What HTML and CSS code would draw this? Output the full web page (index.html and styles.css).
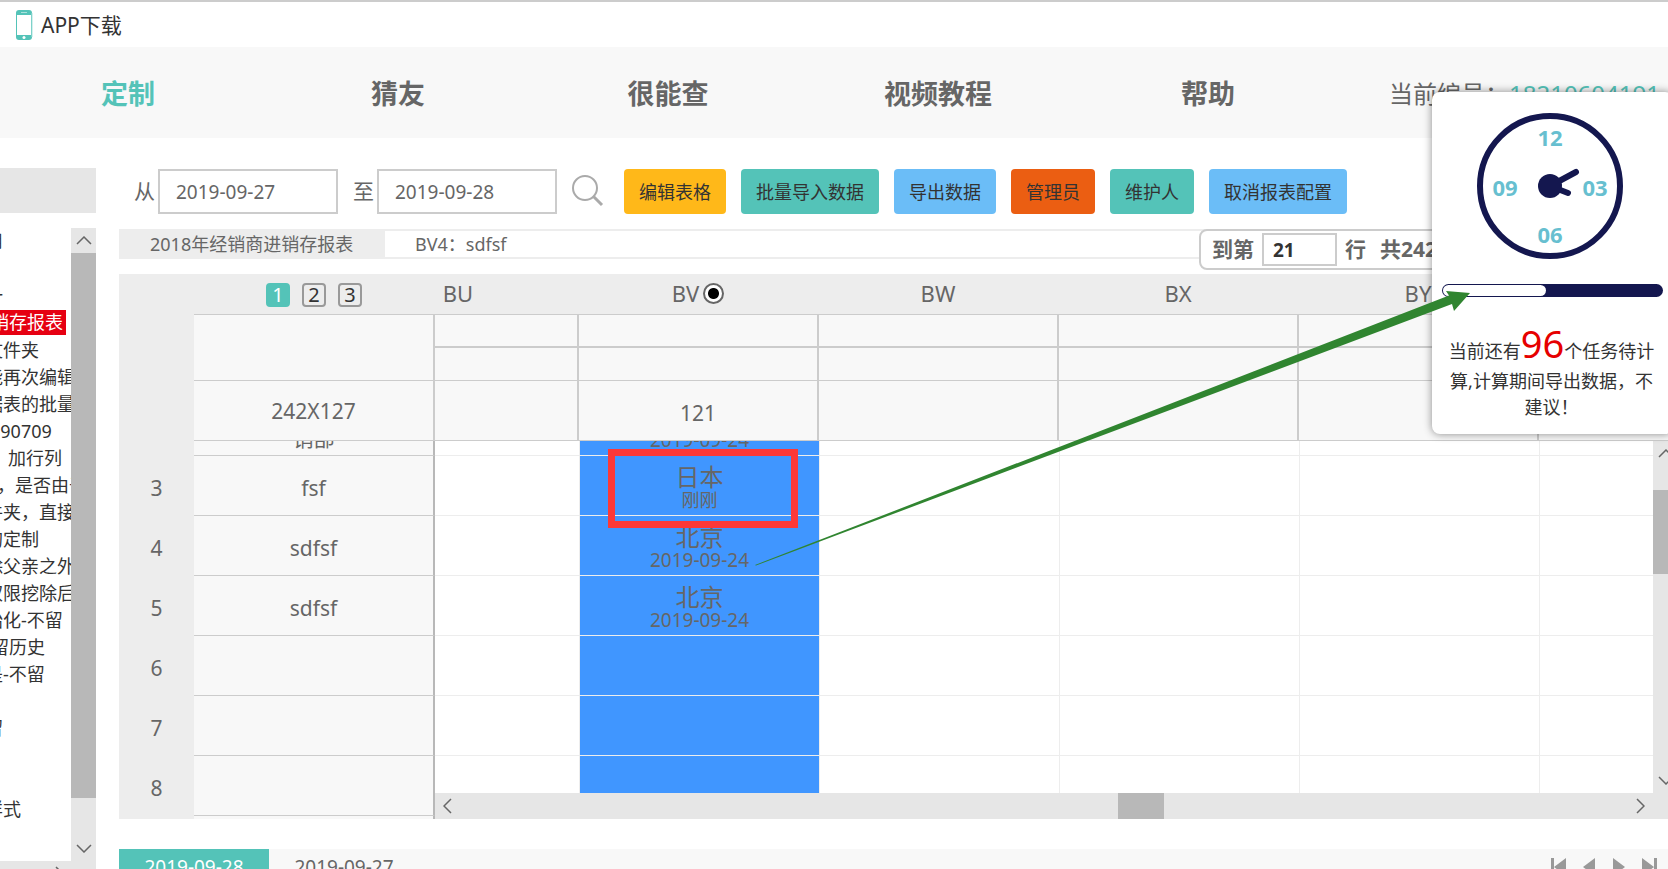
FILE: index.html
```html
<!DOCTYPE html>
<html lang="zh-CN">
<head>
<meta charset="utf-8">
<title>定制</title>
<link rel="stylesheet" href="styles.css">
</head>
<body>
<div class="page">
  <header class="topbar">
    <a class="app-link" href="#">
      <svg width="17" height="30" viewBox="0 0 17 30" aria-hidden="true"><rect width="16" height="30" rx="3" fill="#54c3b8"/><rect x="1" y="5" width="14" height="20" fill="#fff"/><path d="M5 2.5h6" stroke="#fff" stroke-opacity=".5"/><circle cx="8" cy="27.500" r="1.500" fill="#fff"/><path d="M16 3v24" stroke="#a9e1dc"/></svg>
      <span>APP下载</span>
    </a>
  </header>
  <nav class="nav">
    <a class="nav-item active" href="#">定制</a>
    <a class="nav-item" href="#">猜友</a>
    <a class="nav-item" href="#">很能查</a>
    <a class="nav-item" href="#">视频教程</a>
    <a class="nav-item" href="#">帮助</a>
    <p class="account">当前编号：<span>18210604191</span></p>
  </nav>

  <div class="content">
    <aside class="sidebar">
      <div class="side-head"></div>
      <div class="side-body">
        <ul class="tree">
          <li>用</li>
          <li></li>
          <li>一</li>
          <li class="in2"><span class="current">销存报表</span></li>
          <li>文件夹</li>
          <li>能再次编辑</li>
          <li>据表的批量</li>
          <li class="in1">190709</li>
          <li class="in1">，加行列</li>
          <li class="in3">，是否由于</li>
          <li>件夹，直接</li>
          <li>的定制</li>
          <li>除父亲之外</li>
          <li>权限挖除后</li>
          <li>始化-不留</li>
          <li class="in2">留历史</li>
          <li>是-不留</li>
          <li></li>
          <li>留</li>
          <li></li>
          <li></li>
          <li>样式</li>
        </ul>
        <div class="vbar side-vbar">
          <button class="bar-btn" aria-label="向上"><svg width="16" height="9" viewBox="0 0 16 9"><path d="M1 8l7-7 7 7"/></svg></button>
          <div class="side-thumb"></div>
          <button class="bar-btn" aria-label="向下"><svg width="16" height="9" viewBox="0 0 16 9"><path d="M1 1l7 7 7-7"/></svg></button>
        </div>
      </div>
      <div class="side-hbar"><svg width="9" height="16" viewBox="0 0 9 16"><path d="M1 1l7 7-7 7"/></svg></div>
    </aside>

    <main class="main">
      <form class="toolbar">
        <label for="from">从</label>
        <input class="date" id="from" type="text" value="2019-09-27">
        <label class="to" for="to">至</label>
        <input class="date" id="to" type="text" value="2019-09-28">
        <button class="search" type="button" aria-label="查询"><svg width="32" height="32" viewBox="0 0 32 32"><circle cx="13" cy="13" r="12"/><path d="M21.500 21.500l8.500 8.500"/></svg></button>
        <button class="btn amber" type="button">编辑表格</button>
        <button class="btn teal" type="button">批量导入数据</button>
        <button class="btn blue" type="button">导出数据</button>
        <button class="btn orange" type="button">管理员</button>
        <button class="btn teal" type="button">维护人</button>
        <button class="btn blue" type="button">取消报表配置</button>
      </form>

      <div class="crumbs">
        <span class="crumb">2018年经销商进销存报表</span>
        <span class="cell-value">BV4：sdfsf</span>
        <div class="pager">
          <label for="row">到第</label>
          <input id="row" type="text" value="21">
          <span>行</span>
          <span class="total">共242行</span>
        </div>
      </div>

      <div class="sheet">
        <div class="frozen">
          <table class="head-table">
            <colgroup><col class="c-num"><col></colgroup>
            <tr class="r-head"><td class="num"></td><td class="levels"><div><button class="level on">1</button><button class="level">2</button><button class="level">3</button></div></td></tr>
            <tr class="r-group"><td class="num"></td><td class="fz"></td></tr>
            <tr class="r-size"><td class="num"></td><td class="fz">242X127</td></tr>
          </table>
          <div class="frozen-view">
            <table class="body-table">
              <colgroup><col class="c-num"><col></colgroup>
              <tr><th class="num">2</th><td class="fz">北京营<br>销部</td></tr>
              <tr><th class="num">3</th><td class="fz">fsf</td></tr>
              <tr><th class="num">4</th><td class="fz">sdfsf</td></tr>
              <tr><th class="num">5</th><td class="fz">sdfsf</td></tr>
              <tr><th class="num">6</th><td class="fz"></td></tr>
              <tr><th class="num">7</th><td class="fz"></td></tr>
              <tr><th class="num">8</th><td class="fz"></td></tr>
              <tr><th class="num"></th><td class="fz"></td></tr>
            </table>
          </div>
        </div>
        <div class="scroll">
          <div class="head-view">
            <table class="head-table cols">
              <tr class="r-head"><th>BU</th><th><label class="pick">BV<input type="radio" checked></label></th><th>BW</th><th>BX</th><th>BY</th><th></th><th></th></tr>
              <tr class="r-a"><td></td><td></td><td></td><td></td><td></td><td></td><td></td></tr>
              <tr class="r-b"><td></td><td></td><td></td><td></td><td></td><td></td><td></td></tr>
              <tr class="r-size"><td></td><td class="count">121</td><td></td><td></td><td></td><td></td><td></td></tr>
            </table>
          </div>
          <div class="body-row">
            <div class="body-view">
              <table class="body-table cols">
                <tr><td></td><td class="sel"><b>北京</b><i>2019-09-24</i></td><td></td><td></td><td></td><td></td><td></td></tr>
                <tr><td></td><td class="sel"><b>日本</b><i class="cn">刚刚</i></td><td></td><td></td><td></td><td></td><td></td></tr>
                <tr><td></td><td class="sel"><b>北京</b><i>2019-09-24</i></td><td></td><td></td><td></td><td></td><td></td></tr>
                <tr><td></td><td class="sel"><b>北京</b><i>2019-09-24</i></td><td></td><td></td><td></td><td></td><td></td></tr>
                <tr><td></td><td class="sel"></td><td></td><td></td><td></td><td></td><td></td></tr>
                <tr><td></td><td class="sel"></td><td></td><td></td><td></td><td></td><td></td></tr>
                <tr><td></td><td class="sel"></td><td></td><td></td><td></td><td></td><td></td></tr>
              </table>
            </div>
            <div class="vbar">
              <button class="bar-btn" aria-label="向上"><svg width="16" height="9" viewBox="0 0 16 9"><path d="M1 8l7-7 7 7"/></svg></button>
              <div class="sheet-thumb"></div>
              <button class="bar-btn last" aria-label="向下"><svg width="16" height="9" viewBox="0 0 16 9"><path d="M1 1l7 7 7-7"/></svg></button>
            </div>
          </div>
          <div class="hbar">
            <button class="bar-btn" aria-label="向左"><svg width="9" height="16" viewBox="0 0 9 16"><path d="M8 1l-7 7 7 7"/></svg></button>
            <div class="h-track"><div class="h-thumb"></div></div>
            <button class="bar-btn" aria-label="向右"><svg width="9" height="16" viewBox="0 0 9 16"><path d="M1 1l7 7-7 7"/></svg></button>
          </div>
        </div>
      </div>

      <div class="tabs">
        <button class="tab on">2019-09-28</button>
        <button class="tab">2019-09-27</button>
        <div class="tab-nav">
          <button aria-label="第一个"><svg width="16" height="18" viewBox="0 0 16 18"><path d="M0 0h3v18H0zM15 0v18L3 9z"/></svg></button>
          <button aria-label="上一个"><svg width="16" height="18" viewBox="0 0 16 18"><path d="M14 0v18L2 9z"/></svg></button>
          <button aria-label="下一个"><svg width="16" height="18" viewBox="0 0 16 18"><path d="M2 0v18l12-9z"/></svg></button>
          <button aria-label="最后一个"><svg width="16" height="18" viewBox="0 0 16 18"><path d="M13 0h3v18h-3zM1 0v18l12-9z"/></svg></button>
        </div>
      </div>
    </main>
  </div>

  <section class="popup">
    <svg class="clock" width="148" height="148" viewBox="0 0 148 148">
      <circle cx="74" cy="74" r="70" fill="#fff" stroke="#14174f" stroke-width="6"/>
      <g stroke="#14174f" stroke-width="6" stroke-linecap="round"><path d="M74 74L100 60"/><path d="M74 74L92 81"/></g>
      <circle cx="74" cy="74" r="12" fill="#14174f"/>
      <g class="digits"><text x="74" y="34">12</text><text x="119" y="84">03</text><text x="74" y="131">06</text><text x="29" y="84">09</text></g>
    </svg>
    <div class="progress"><div class="remain"></div></div>
    <p class="notice">当前还有<strong>96</strong>个任务待计算,计算期间导出数据，不建议！</p>
  </section>

  <div class="mark"></div>
  <svg class="arrow" width="716" height="276" viewBox="0 0 716 276" aria-hidden="true"><path d="M0 275L694 5.500L691 1L715 3L699 21L697 14L1 275.500z" fill="#308530"/></svg>
</div>
</body>
</html>
```
FILE: styles.css
```css
* { box-sizing: border-box; }
body {
  margin: 0;
  color: #666;
  background: #fff;
  font-family: "Noto Sans", "Noto Sans CJK SC", sans-serif;
  font-size: 18px;
  line-height: 27px;
}
button, input { font: inherit; color: inherit; }
button { border: 0; padding: 0; background: none; }
a { color: inherit; text-decoration: none; }
p, ul { margin: 0; padding: 0; list-style: none; }

.page { position: relative; height: 100vh; overflow: hidden; }

.topbar { height: 47px; border-top: 2px solid #ccc; padding: 8px 16px; }
.app-link { display: flex; gap: 8px; color: #333; font-size: 21px; line-height: 30px; }

.nav { display: flex; align-items: center; height: 91px; padding: 2px 8px 0 0; background: #f8f8f8; margin-left: -7px; }
.nav-item { flex: 0 0 270px; text-align: center; font-size: 27px; line-height: 40px; font-weight: bold; }
.nav-item.active { color: #54c3b8; }
.account { margin-left: auto; font-size: 24px; line-height: 36px; white-space: nowrap; }
.account span { color: #54c3b8; }

.content { display: flex; align-items: flex-start; gap: 23px; padding-top: 30px; }

.sidebar { flex: 0 0 96px; }
.side-head { height: 45px; background: #e6e6e6; margin-bottom: 15px; }
.side-body { display: flex; height: 633px; overflow: hidden; }
.tree { flex: 0 0 71px; overflow: hidden; text-indent: -15px; color: #333; }
.tree li { height: 27px; line-height: 26px; white-space: nowrap; }
.tree .in1 { text-indent: -10px; }
.tree .in2 { text-indent: -9px; }
.tree .in3 { text-indent: -3px; }
.tree .current { display: block; width: 66px; height: 25px; line-height: 25px; margin-top: 1px; color: #fff; background: #e60012; }
.side-hbar { height: 26px; padding: 5px 32px; background: #e6e6e6; text-align: right; line-height: 0; }

.vbar { flex: 0 0 26px; display: flex; flex-direction: column; background: #e6e6e6; }
.side-vbar { flex-basis: 25px; }
.bar-btn { display: flex; align-items: center; justify-content: center; flex: 0 0 25px; }
.bar-btn path, .side-hbar path { fill: none; stroke: #666; stroke-width: 1.500; }
.side-thumb { height: 545px; background: #b8b8b8; }
.side-vbar .bar-btn:last-child { margin-top: auto; }

.main { flex: 1; min-width: 0; margin-right: -11px; }

.toolbar { display: flex; align-items: center; gap: 15px; height: 47px; padding-left: 15px; }
.toolbar label { font-size: 21px; margin-right: -12px; }
.date { width: 180px; height: 45px; border: 2px solid #ccc; padding: 0 16px; font-size: 19px; background: #fff; }
.search { display: flex; width: 37px; height: 34px; }
.search svg { flex: none; fill: none; stroke: #aaa; stroke-width: 2; }
.search path { stroke-width: 3; }
.btn { height: 45px; padding: 2px 15px 0; border-radius: 4px; color: #333; white-space: nowrap; }
.amber { background: #ffb819; }
.teal { background: #54c3b8; }
.blue { background: #6bbdf7; }
.orange { background: #eb5e12; }

.crumbs { display: flex; align-items: flex-start; height: 30px; margin: 14px 0 15px; border: solid #ededed; border-width: 2px 0; }
.crumb { flex: 0 0 266px; background: #ededed; padding-left: 31px; line-height: 26px; white-space: nowrap; }
.cell-value { padding-left: 30px; line-height: 26px; }
.pager {
  display: flex; align-items: center; flex: 0 0 480px; gap: 8px; height: 41px;
  margin: -2px 0 0 auto; padding-left: 11px; border: 2px solid #ccc; border-radius: 8px;
  background: #fff; font-size: 21px; font-weight: bold;
}
.pager input { width: 75px; height: 33px; border: 2px solid #ccc; padding: 0 9px; color: #333; font-size: 19px; font-weight: bold; }
.total { padding-left: 6px; }

.sheet { display: flex; height: 545px; overflow: hidden; background: #ededed; font-size: 21px; }
.frozen { flex: 0 0 316px; }
table { border-collapse: separate; border-spacing: 0; table-layout: fixed; width: 100%; }
th, td { padding: 0; font-weight: normal; text-align: center; overflow: hidden; line-height: 26px; }
.c-num { width: 75px; }
.num { background: #ededed; padding-top: 4px; }
.fz { background: #f8f8f8; border-right: 2px solid #ccc; border-bottom: 1px solid #ccc; }
.levels { border-bottom: 1px solid #ccc; }
.levels div { display: flex; gap: 12px; padding: 2px 0 0 72px; }
.level { width: 24px; height: 24px; border: 2px solid #999; border-radius: 4px; font-size: 20px; line-height: 20px; color: #333; }
.level.on { border-color: #54c3b8; background: #54c3b8; color: #fff; }
.r-head { height: 41px; }
.r-a, .r-b { height: 33px; }
.r-group { height: 66px; }
.r-size { height: 60px; }
.frozen-view { height: 378px; overflow: hidden; }
.body-table { margin-top: -45px; }
.body-table tr { height: 60px; }
.body-table .fz { border-right-color: #b8b8b8; }
.body-table .fz:not(:empty) { padding-top: 4px; }
.frozen-view tr:first-child .fz:not(:empty) { padding-top: 0; line-height: 24px; }

.scroll { flex: 1; min-width: 0; display: flex; flex-direction: column; }
.head-view { overflow: hidden; flex: 0 0 167px; }
.cols { width: 1680px; }
.head-table.cols { margin-left: -96px; }
.head-table th { border-bottom: 1px solid #ccc; padding: 0 2px 2px 0; font-size: 22px; }
.head-table.cols td { background: #f8f8f8; border-right: 2px solid #ccc; border-bottom: 1px solid #ccc; }
.head-table.cols .r-a td { border-bottom-width: 2px; }
.head-table.cols .count { padding-top: 4px; }
.pick { display: flex; align-items: center; justify-content: center; gap: 4px; }
.pick input { appearance: none; width: 21px; height: 21px; margin: 0; border: 2px solid #666; border-radius: 50%; background: radial-gradient(circle, #000 5px, #fff 6px); }

.body-row { display: flex; flex: 0 0 352px; overflow: hidden; }
.body-view { flex: 1; min-width: 0; overflow: hidden; background: #fff; }
.body-table.cols { margin-left: -95px; }
.body-table.cols td { border-right: 1px solid #ededed; border-bottom: 1px solid #ededed; }
.body-table.cols .sel { padding-top: 4px; background: #4096ff; }
.sel b { display: block; padding-top: 1px; font-size: 24px; font-weight: normal; line-height: 24px; }
.sel i { display: block; font-size: 19px; font-style: normal; line-height: 22px; }
.sel .cn { font-size: 18px; }
.sheet-thumb { height: 84px; margin-top: 24px; background: #b8b8b8; }
.body-row .last { margin-top: auto; }
.hbar { display: flex; flex: 0 0 26px; padding-right: 26px; background: #e6e6e6; }
.h-track { flex: 1; padding-left: 54%; }
.h-thumb { width: 46px; height: 26px; background: #b8b8b8; }

.tabs { display: flex; height: 45px; margin-top: 30px; background: #f8f8f8; }
.tab { display: flex; justify-content: center; align-self: flex-start; width: 150px; font-size: 19px; line-height: 36px; }
.tab.on { color: #fff; background: #54c3b8; height: 45px; }
.tab-nav { display: flex; gap: 14px; margin-left: auto; padding: 9px 22px 0 0; }
.tab-nav button { display: flex; align-self: flex-start; }
.tab-nav path { fill: #999; }

.popup {
  position: absolute; top: 92px; right: -5px; width: 241px; padding: 20px 10px 14px;
  border-radius: 8px; background: #fff; box-shadow: 0 0 8px rgba(0, 0, 0, .45); text-align: center;
}
.clock { display: block; margin: 0 34px; }
.digits text { fill: #67bfd0; font-size: 22px; font-weight: bold; text-anchor: middle; }
.progress { height: 13px; margin: 24px 0 0; padding: 1px; border-radius: 7px; background: #14174f; }
.remain { width: 47%; height: 11px; border-radius: 6px; background: #fff; }
.notice { padding: 0 8px 0 6px; margin-top: 22px; color: #333; line-height: 26px; }
.notice strong { color: #e60000; font-size: 38px; font-weight: normal; line-height: 49px; }

.mark { position: absolute; left: 608px; top: 449px; width: 190px; height: 79px; border: 7px solid #fc3838; }
.arrow { position: absolute; left: 755px; top: 290px; }
```
